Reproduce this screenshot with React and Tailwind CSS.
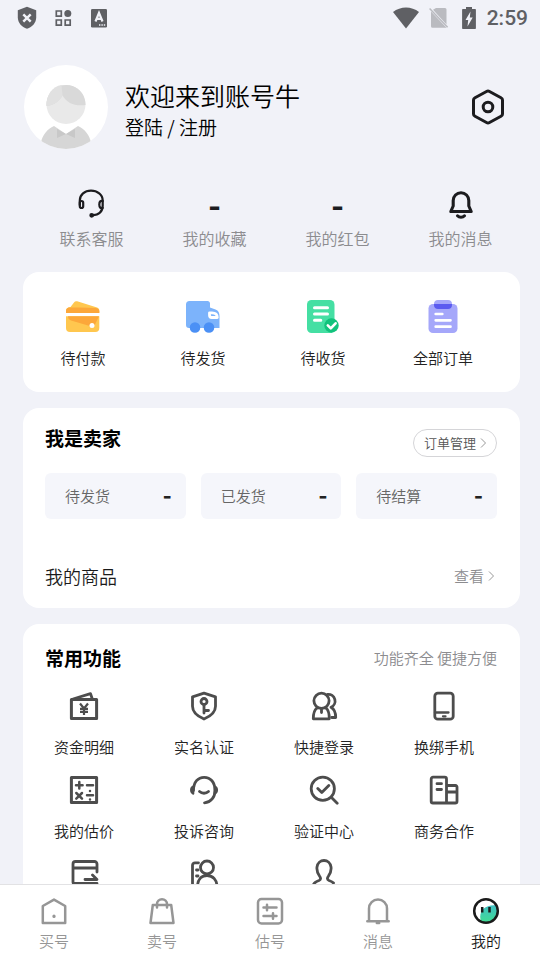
import React from 'react';

// Line icon wrapper, every icon below is drawn on its own small grid
const Icon = ({ size = 30, box = 30, stroke = 2.8, className = '', children }) => (
  <svg
    width={size}
    height={size}
    viewBox={`0 0 ${box} ${box}`}
    fill="none"
    stroke="currentColor"
    strokeWidth={stroke}
    strokeLinecap="round"
    strokeLinejoin="round"
    className={className}
    aria-hidden="true"
  >
    {children}
  </svg>
);

const StatusBar = () => (
  <div className="flex h-9 shrink-0 items-center justify-between pr-3 pl-4 text-[#5f6064]">
    <div className="flex items-center gap-3">
      <svg width="24" height="24" viewBox="0 0 24 24" aria-hidden="true">
        <path d="M11 .8 1.8 4.2v7.3c0 5 3.8 9.7 9.2 11.3 5.4-1.6 9.2-6.3 9.2-11.3V4.2z" fill="currentColor" />
        <path d="m7.3 8.3 7.4 7.4m0-7.4-7.4 7.4" stroke="#f1f2f8" strokeWidth="2.4" />
      </svg>
      <svg width="24" height="24" viewBox="0 0 24 24" fill="none" stroke="currentColor" strokeWidth="1.7" aria-hidden="true">
        <path d="M4.300 5h5v5.200h-5zM4.300 14h5v5.200h-5zM13.200 14h5v5.200h-5z" />
        <circle cx="15.8" cy="7.6" r="3.5" fill="currentColor" stroke="none" />
      </svg>
      <svg width="24" height="24" viewBox="0 0 24 24" fill="none" aria-hidden="true">
        <rect x="3" y="3" width="16" height="18.5" rx="1.3" fill="currentColor" />
        <path d="m7.500 15.500 3.500-8.500 3.500 8.500M8.800 12.800h4.400" stroke="#f1f2f8" strokeWidth="2.2" />
        <path d="M11 19h1.400m1 0h1.400m1 0h1.400" stroke="#f1f2f8" strokeWidth="1.3" />
      </svg>
    </div>
    <div className="flex items-center gap-2.5">
      <svg width="26" height="22" viewBox="0 0 26 22" aria-hidden="true">
        <path d="M0 5C7.500-1 18.500-1 26 5L13 21.500z" fill="currentColor" />
      </svg>
      <svg width="22" height="22" viewBox="0 0 22 22" aria-hidden="true">
        <path d="M7 1h9a1.500 1.500 0 0 1 1.500 1.500v15L4 2.800zM2 4.500l15.500 16.300h-14A1.500 1.500 0 0 1 2 19.300z" fill="#babbc0" />
        <path d="m.6 1.600 18 18.600" stroke="#babbc0" strokeWidth="1.5" />
      </svg>
      <svg width="16" height="22" viewBox="0 0 16 22" aria-hidden="true">
        <path d="M5 0h6v2h3.200a.7.7 0 0 1 .7.7v18.600a.7.7 0 0 1-.7.7H1.800a.7.7 0 0 1-.7-.7V2.700a.7.7 0 0 1 .7-.7H5z" fill="currentColor" />
        <path d="M9.500 4.500 4.500 13h2.700l-.7 6.500 5.200-9H8.800z" fill="#f1f2f8" />
      </svg>
      <span className="font-['Roboto'] text-[21px] leading-6 font-medium">2:59</span>
    </div>
  </div>
);

const Avatar = () => (
  <svg width="84" height="84" viewBox="0 0 84 84" className="shrink-0" aria-hidden="true">
    <defs>
      <clipPath id="avatar-clip">
        <circle cx="42" cy="42" r="42" />
      </clipPath>
    </defs>
    <g clipPath="url(#avatar-clip)">
      <rect width="84" height="84" fill="#fff" />
      <circle cx="42" cy="39.5" r="19.5" fill="#e9e9e9" />
      <path d="M22.500 41a19.500 19.500 0 0 1 15-20.500c6-1.500 12 0 16.500 3.500 5 4 7.500 9.500 7.500 16-10 1.500-18.500-1.500-23-9.500-3 5.500-8 9.500-16 10.500z" fill="#d9d9d9" />
      <path d="M22.500 41c8-1 13-5 16-10.500l-1-10.500c-9 1.500-15 9-15 21z" fill="#e1e1e1" />
      <path d="M17 78c1-8 6.500-14 13-17l12 8 12-8c6.500 3 12 9 13 17v6H17z" fill="#d6d6d6" />
      <path d="m33 64 9 5 9-5v9l-9-4-9 4z" fill="#c8c8c8" />
    </g>
  </svg>
);

const HeadsetIcon = () => (
  <Icon stroke={2.2} className="text-[#1c1c1f]">
    <g transform="translate(-1 -1)">
      <path d="M3.800 17v-4.500C3.800 6.500 8.700 2.600 15 2.600s11.700 3.900 11.700 9.900v5c0 6-3.800 9.300-10.500 9.800" />
      <rect x="3.8" y="13" width="3.4" height="7" rx="1.7" />
      <path d="M26.700 13c-2-.8-3.400.6-3.400 3.500s1.400 4.300 3.400 3.500" />
      <circle cx="15.7" cy="27.3" r="1.3" fill="currentColor" />
    </g>
  </Icon>
);

const BellIcon = () => (
  <Icon stroke={3.1} className="text-[#1c1c1f]">
    <path d="M4.800 22.500h20.400L22.800 17v-5.500a7.800 7.800 0 0 0-15.600 0V17z" />
    <path d="M11.500 26.800c1.800 2 5.200 2 7 0" />
  </Icon>
);

const SettingsIcon = () => (
  <Icon size={36} box={36} stroke={3} className="text-[#1c1c1f]">
    <path d="M16.500 2.500c.9-.5 2.100-.5 3 0L31 8.700c.9.500 1.500 1.400 1.500 2.400v13.800c0 1-.6 1.900-1.500 2.400l-11.500 6.200c-.9.500-2.100.5-3 0L5 27.300c-.9-.5-1.500-1.400-1.500-2.400V11.100c0-1 .6-1.900 1.500-2.400z" />
    <circle cx="18" cy="18" r="4.8" />
  </Icon>
);

const CardPayIcon = () => (
  <svg width="36" height="36" viewBox="0 0 36 36" aria-hidden="true">
    <path d="M5.500 8 9 3.500c.8-1.200 1.800-1.600 3.200-1.200L32 8.500c1.500.5 2.300 1.500 2.300 3V14H1v-2.500C1 9.500 3 8 5.500 8z" fill="#ffc74f" />
    <path d="M4.500 8.500H14l17 .5c2 .3 3.300 1.500 3.300 3.200V14H1v-2c0-2 1.500-3.500 3.500-3.500z" fill="#fca73a" />
    <path d="M1 17.300h33.300V29a4 4 0 0 1-4 4H5a4 4 0 0 1-4-4z" fill="#ffc74f" />
    <path d="M3 17.300h31l-4.500 9.200c-.7 1.200-1.600 1.500-3 1.100L6 21.500c-1.800-.6-3-2-3-4.200z" fill="#fca73a" />
    <circle cx="27" cy="26.5" r="2.5" fill="#fff" />
  </svg>
);

const TruckIcon = () => (
  <svg width="36" height="36" viewBox="0 0 36 36" aria-hidden="true">
    <path d="M4.500 2h18C24 2 25 3 25 4.500v4l5.500 2c3 1.200 4 3.500 4 6.500v12H4a3 3 0 0 1-3-3V5.500A3.500 3.500 0 0 1 4.500 2z" fill="#7cb3fb" />
    <circle cx="10" cy="28.5" r="5.3" fill="#4b90f5" />
    <circle cx="24" cy="28.5" r="5.3" fill="#4b90f5" />
    <path d="M24.500 13.800H27c3 0 5.300 1.500 5.300 4.700h-5.600c-1.300 0-2.200-.8-2.200-2.200z" fill="#7cb3fb" stroke="#fff" strokeWidth="2.8" strokeLinejoin="round" />
  </svg>
);

const ReceivedIcon = () => (
  <svg width="36" height="36" viewBox="0 0 36 36" fill="none" strokeLinecap="round" strokeLinejoin="round" aria-hidden="true">
    <rect x="2" y="1" width="27.5" height="33" rx="4.5" fill="#45dfa3" />
    <path d="M9.500 8.800h13M9.500 15h13M9.500 21.200h6.300" stroke="#fff" strokeWidth="3" />
    <circle cx="26.5" cy="26.5" r="7.2" fill="#11c27c" />
    <path d="m22.800 26.300 3 3 4.800-5" stroke="#fff" strokeWidth="2.6" />
  </svg>
);

const AllOrdersIcon = () => (
  <svg width="36" height="36" viewBox="0 0 36 36" fill="none" strokeLinecap="round" aria-hidden="true">
    <rect x="3.5" y="5" width="29" height="29" rx="4.5" fill="#a5a7fa" />
    <path d="M9 5c0-2.500 1.500-4 4-4h10c2.500 0 4 1.500 4 4z" fill="#a5a7fa" />
    <path d="M9 5h18v1c0 2.500-1.500 4-4 4H13c-2.500 0-4-1.500-4-4z" fill="#5b5bf0" />
    <path d="M10.700 15h6.600M10.700 21.300h14.800M10.700 27.700h14.800" stroke="#fff" strokeWidth="2.7" />
  </svg>
);

const stats = [
  { label: '联系客服', icon: <HeadsetIcon /> },
  { label: '我的收藏' },
  { label: '我的红包' },
  { label: '我的消息', icon: <BellIcon /> },
];

const orders = [
  { label: '待付款', icon: <CardPayIcon /> },
  { label: '待发货', icon: <TruckIcon /> },
  { label: '待收货', icon: <ReceivedIcon /> },
  { label: '全部订单', icon: <AllOrdersIcon /> },
];

const sellerStats = ['待发货', '已发货', '待结算'];

const features = [
  {
    label: '资金明细',
    icon: (
      <>
        <path d="M2.400 8.500h25.200v19H2.400z" strokeWidth="3" />
        <path d="M4 8 21.500 2.600 23.300 8" />
        <path d="m11 12.500 4 5 4-5M15 17.500V24M11 17.800h8M11 20.800h8" strokeWidth="2.2" strokeLinecap="butt" />
      </>
    ),
  },
  {
    label: '实名认证',
    icon: (
      <>
        <path d="m15 2.200 11.500 3.600v9.400c0 5.500-4.500 9.800-11.500 12.800-7-3-11.500-7.300-11.500-12.800V5.800z" />
        <circle cx="15" cy="10.5" r="3" />
        <path d="M15 13.500V22M15 19.500h4.500" />
      </>
    ),
  },
  {
    label: '快捷登录',
    icon: (
      <>
        <circle cx="12.5" cy="9.8" r="7.6" />
        <path d="M18.500 3.400A6.700 6.700 0 0 1 22 16.200c3.300 1.800 4.700 5 4.700 10.300h-4" />
        <path d="M8 17.200c-3 2-3.700 5.500-3.700 10.600h16c0-5-.8-8.800-3.300-10.600M12.500 18.500v3" />
      </>
    ),
  },
  {
    label: '换绑手机',
    icon: (
      <>
        <rect x="5.8" y="2.2" width="18.4" height="26" rx="3" />
        <path d="M6 21.500h13.500M14 25.300h2.500" strokeWidth="2.3" />
      </>
    ),
  },
  {
    label: '我的估价',
    icon: (
      <>
        <path d="M2.400 2.400h25.200v25.200H2.400z" strokeWidth="3" />
        <path d="M7 10.300h6.600M10.300 7v6.600M18 10.300h6M7.300 18l5.700 5.700M13 18l-5.700 5.700M18 20.300h6M21 16v.1M21 24.400v.1" strokeWidth="2.5" />
      </>
    ),
  },
  {
    label: '投诉咨询',
    icon: (
      <>
        <path d="M4.500 15.500C4.500 7 9 2.300 15.200 2.300S26 7 26 15.500c0 6.500-4 12-10.500 12.300" />
        <path d="M4.300 11.500c-3 1.200-3 6 0 7.200zM25.800 11.500c3 1.200 3 6 0 7.200z" fill="currentColor" strokeWidth="2" />
        <path d="M10.500 16.500c2.500 2.300 6.500 2.300 9 0" />
      </>
    ),
  },
  {
    label: '验证中心',
    icon: (
      <>
        <circle cx="13.8" cy="13.8" r="11.6" />
        <path d="m8.800 13.500 4 4 7-7M22.500 22.500l5.700 5.700" />
      </>
    ),
  },
  {
    label: '商务合作',
    icon: (
      <>
        <path d="M17.500 28H4a1.800 1.800 0 0 1-1.800-1.800V4A1.800 1.800 0 0 1 4 2.200h11.700A1.800 1.800 0 0 1 17.500 4zM17.500 10.500h9A1.500 1.500 0 0 1 28 12v14.200a1.800 1.800 0 0 1-1.800 1.800h-8.700M17.500 17h10.200M8 8.700h4.500M8 14.500h4.500" />
      </>
    ),
  },
];

const moreFeatures = [
  {
    label: '提现',
    icon: (
      <>
        <path d="M28 13V5a2.500 2.500 0 0 0-2.500-2.500h-19A2.500 2.500 0 0 0 4 5v18a1.500 1.500 0 0 0 1.500 1.500H28M4 9h24M16 20.500h12L23.500 16" />
      </>
    ),
  },
  {
    label: '实名信息',
    icon: (
      <>
        <circle cx="18" cy="8.5" r="6.5" />
        <path d="M9.500 3.800H6a2.500 2.500 0 0 0-2.500 2.500V28M7.500 11H9M7.500 17H9" />
        <path d="M8.500 28c0-7 3.500-11.500 9.500-11.500S28 21 28 28" />
      </>
    ),
  },
  {
    label: '个人资料',
    icon: (
      <>
        <path d="M4 27c.5-3.200 3-4.500 6-5.500 2-.8 2-2.500.5-4.500C8.500 14 7.500 11.500 8 8c.5-4 3.500-6.500 7-6.500S21.500 4 22 8c.5 3.500-.5 6-2.500 9-1.500 2-1.500 3.700.5 4.500 2 .7 3.500 1.300 4.500 2.500M26.500 26.500v.1" />
      </>
    ),
  },
];

const tabs = [
  {
    label: '买号',
    icon: (
      <>
        <path d="M2.800 9 14 2.600 25.200 9v17H2.800z" />
        <path d="M14 19v.5" strokeWidth="3.2" />
      </>
    ),
  },
  {
    label: '卖号',
    icon: (
      <>
        <path d="M4.800 8h18.400l2.300 18H2.500z" />
        <path d="M9 10.500V7.200a5 5 0 0 1 10 0v3.300" />
      </>
    ),
  },
  {
    label: '估号',
    icon: (
      <>
        <rect x="2" y="2" width="24" height="24.5" rx="3.5" />
        <path d="M7.500 10.500h13M11 7.800v5.400M7.500 19h13M17 16.300v5.400" />
      </>
    ),
  },
  {
    label: '消息',
    icon: (
      <>
        <path d="M5 24V11.500a9 9 0 0 1 18 0V24M3.300 24.300h21.400" />
        <path d="M12.800 26h2.400" />
      </>
    ),
  },
  {
    label: '我的',
    active: true,
    icon: (
      <>
        <defs>
          <linearGradient id="tab-face" x1="0" y1="0" x2="0" y2="1">
            <stop offset="0" stopColor="#3fc0c4" />
            <stop offset="1" stopColor="#40dc92" />
          </linearGradient>
        </defs>
        <path d="M9 24.500C6 15 12 7 25 8.500a12 12 0 0 1-16 16z" fill="url(#tab-face)" stroke="none" />
        <circle cx="14" cy="14" r="11.8" />
        <path d="M10.200 10v5.500M17.500 10v5.500" strokeLinecap="butt" />
      </>
    ),
  },
];

const Chevron = () => (
  <svg width="7" height="12" viewBox="0 0 7 12" fill="none" stroke="#999" strokeWidth="1" aria-hidden="true">
    <path d="m1 1.500 4.500 4.500L1 10.500" />
  </svg>
);

const FeatureButton = ({ icon, label, hideLabel }) => (
  <button type="button" aria-label={label} className="flex h-[84px] flex-col items-center gap-4">
    <Icon className="text-[#4d4d4d]">{icon}</Icon>
    {!hideLabel && <span className="text-[15px] leading-5 text-[#222]">{label}</span>}
  </button>
);

const App = () => {
  return (
    <div className="flex h-dvh flex-col bg-[#f1f2f8] font-['Noto_Sans_CJK_SC',sans-serif] font-[350] text-black">
      <StatusBar />

      <main className="min-h-0 flex-1 overflow-y-auto [scrollbar-width:none]">
        {/* Profile header */}
        <header className="flex items-center pt-[29px] pr-[34px] pl-6">
          <Avatar />
          <div className="ml-[17px] flex-1 pt-1.5">
            <h1 className="text-[25px] leading-8">欢迎来到账号牛</h1>
            <a href="#login" className="mt-0.5 block text-[19px] leading-7">登陆 / 注册</a>
          </div>
          <button type="button" aria-label="设置">
            <SettingsIcon />
          </button>
        </header>

        <section className="mt-[39px] grid grid-cols-4 pr-[18px] pl-[30px]">
          {stats.map(({ label, icon }) => (
            <button key={label} type="button" className="flex flex-col items-center gap-1.5">
              <span className="flex h-8 items-center text-[34px] leading-8 font-bold text-[#1c1c1f]">
                {icon || '-'}
              </span>
              <span className="text-[16px] leading-6 text-[#8c8c8f]">{label}</span>
            </button>
          ))}
        </section>

        <div className="mt-[22px] mr-5 ml-[23px] flex flex-col gap-4">
          {/* Buyer orders */}
          <section className="grid h-[120px] grid-cols-4 rounded-2xl bg-white pt-[27px] pr-[17px]">
            {orders.map(({ label, icon }) => (
              <button key={label} type="button" className="flex flex-col items-center gap-[11px]">
                {icon}
                <span className="text-[15px] leading-6 text-[#222]">{label}</span>
              </button>
            ))}
          </section>

          {/* Seller panel */}
          <section className="rounded-2xl bg-white pt-[18px] pr-[23px] pb-5 pl-[22px]">
            <div className="flex items-center justify-between">
              <h2 className="pb-[7px] text-[19px] leading-6 font-bold">我是卖家</h2>
              <button
                type="button"
                className="mt-[3px] flex h-7 items-center gap-1 rounded-full border border-[#d5d5d8] pr-[9px] pl-2.5 text-[13px] text-[#555]"
              >
                订单管理
                <Chevron />
              </button>
            </div>
            <div className="mt-4 grid grid-cols-3 gap-[15px]">
              {sellerStats.map((label) => (
                <button
                  key={label}
                  type="button"
                  className="flex h-[46px] items-center justify-between rounded-md bg-[#f5f6fb] pr-3.5 pl-5"
                >
                  <span className="text-[15px] text-[#666]">{label}</span>
                  <span className="pb-1 text-[24px] leading-6 font-bold text-[#222]">-</span>
                </button>
              ))}
            </div>
            <div className="mt-[45px] flex items-center justify-between">
              <h3 className="text-[18px] leading-6 text-[#1a1a1a]">我的商品</h3>
              <a href="#goods" className="flex items-center gap-1 pr-0.5 text-[15px] text-[#8c8c8f]">
                查看
                <Chevron />
              </a>
            </div>
          </section>

          {/* Common features */}
          <section className="rounded-t-2xl bg-white pt-[22px]">
            <div className="flex items-center justify-between pr-[23px] pl-[22px]">
              <h2 className="text-[19px] leading-6 font-bold">常用功能</h2>
              <span className="text-[15px] text-[#8c8c8f]">功能齐全 便捷方便</span>
            </div>
            <div className="mt-[21px] grid grid-cols-4 pr-4 pl-px">
              {features.map((item) => (
                <FeatureButton key={item.label} {...item} />
              ))}
              {moreFeatures.map((item) => (
                <FeatureButton key={item.label} hideLabel {...item} />
              ))}
            </div>
          </section>
        </div>
      </main>

      <nav className="grid h-[76px] shrink-0 grid-cols-5 border-t border-[#e2e2e4] bg-white">
        {tabs.map(({ label, icon, active }) => (
          <a
            key={label}
            href={`#${label}`}
            className={`flex flex-col items-center gap-1 pt-3 ${active ? 'text-[#1a1a1a]' : 'text-[#969696]'}`}
          >
            <Icon size={28} box={28} stroke={2.5}>{icon}</Icon>
            <span className="text-[15px] leading-6">{label}</span>
          </a>
        ))}
      </nav>
    </div>
  );
};

export default App;
